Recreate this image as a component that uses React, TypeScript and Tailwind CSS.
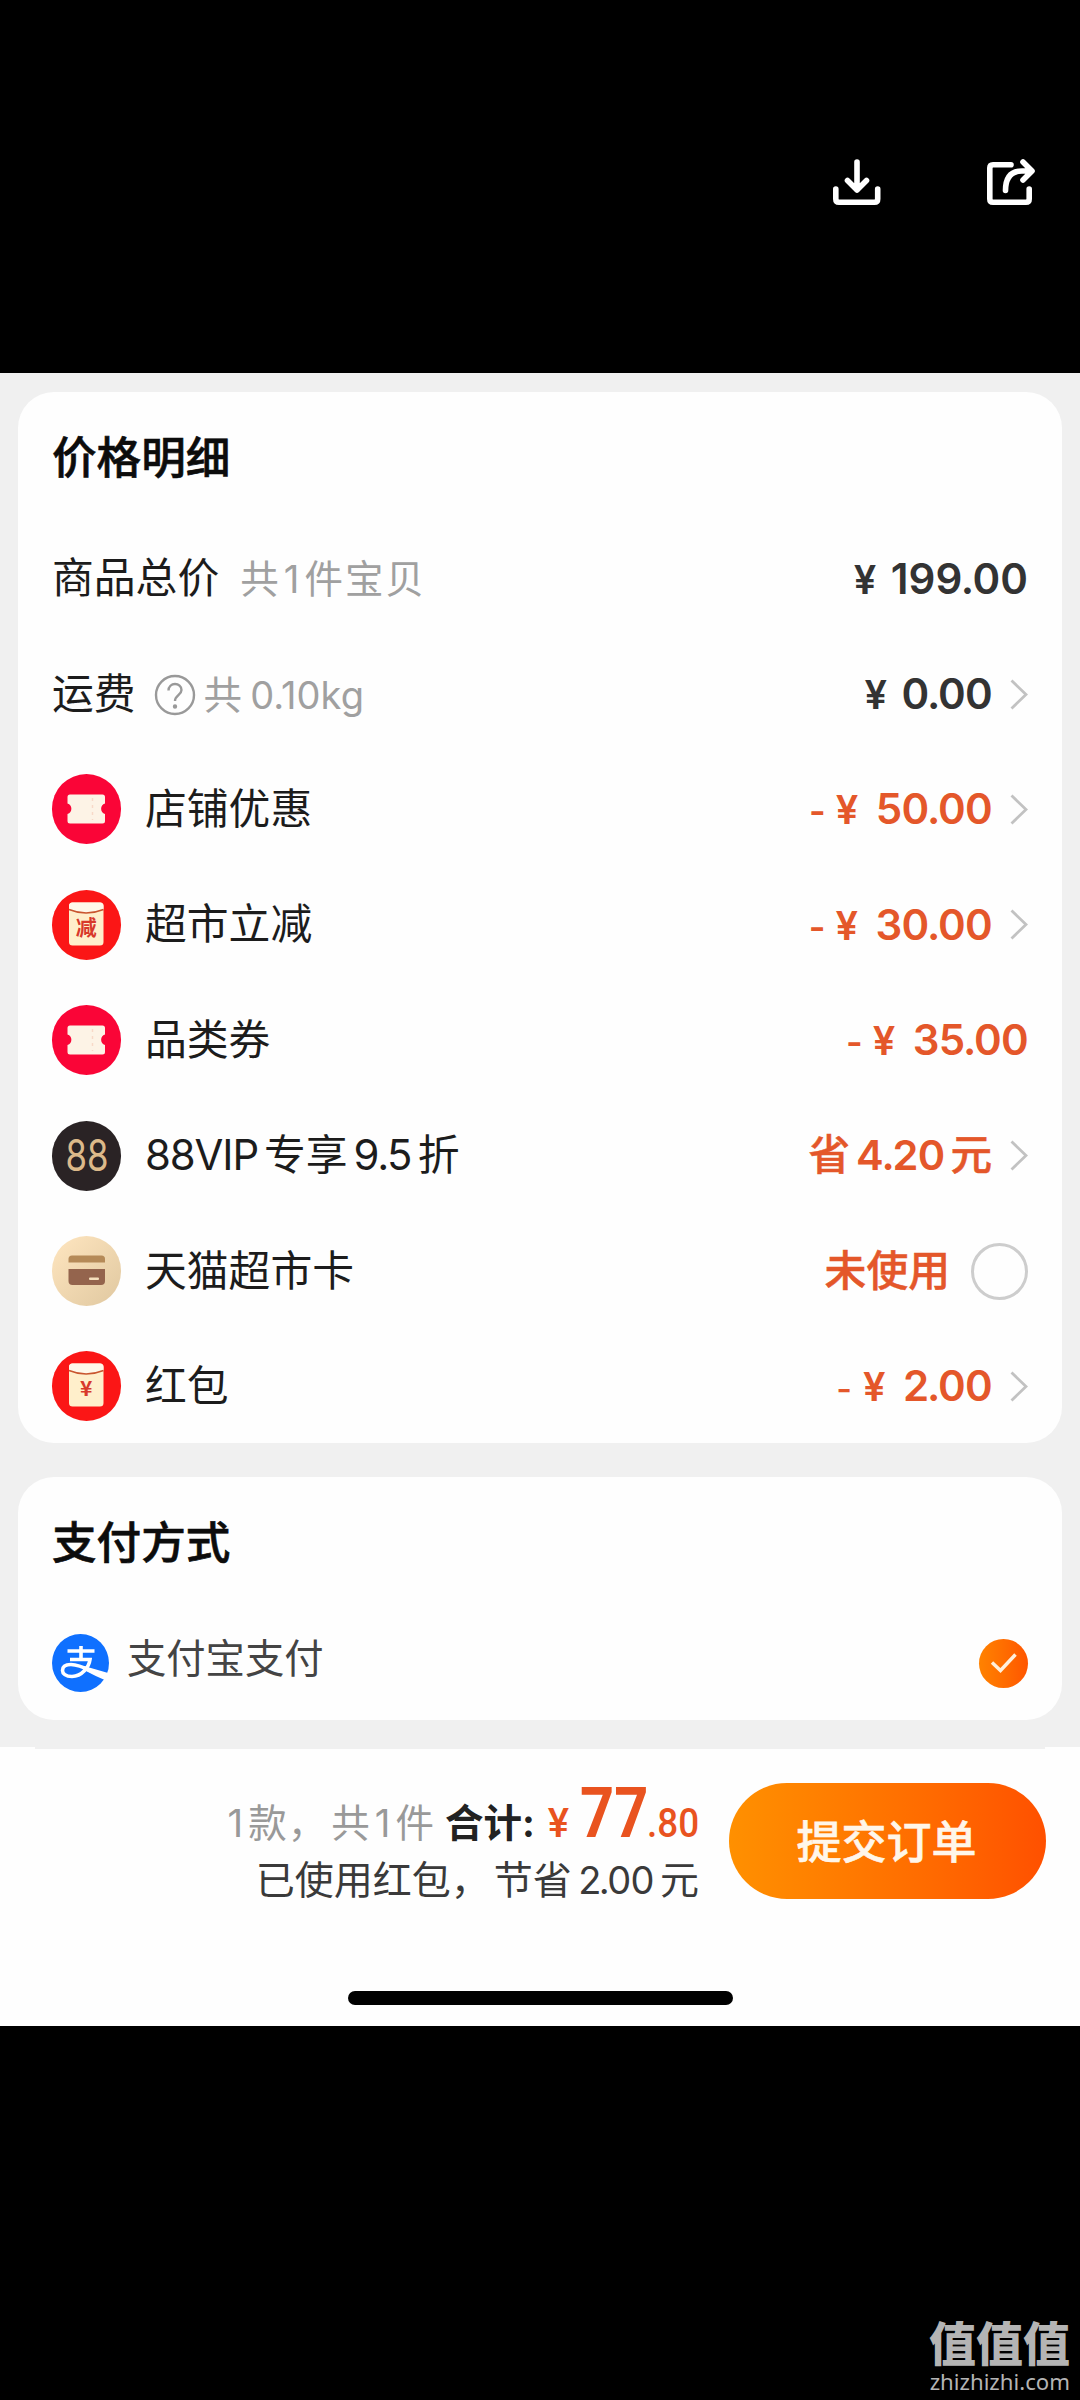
import type { ReactNode } from 'react';

const Badge = ({ className, children }: { className: string; children: ReactNode }) => (
  <div className={`mr-[24px] h-[70px] w-[69px] shrink-0 overflow-hidden rounded-full ${className}`}>
    <svg viewBox="0 0 69 70" className="h-full w-full">{children}</svg>
  </div>
);

const Ticket = () => (
  <Badge className="bg-[#fa0537]">
    <path
      d="M18 20.5H50.5a2.500 2.500 0 0 1 2.500 2.500V29.500a5.500 5.500 0 0 0 0 10.500V47a2.500 2.500 0 0 1-2.500 2.500H18a2.500 2.500 0 0 1-2.500-2.500V40a5.500 5.500 0 0 0 0-10.500V23a2.500 2.500 0 0 1 2.500-2.500Z"
      fill="#fdf3e6"
    />
    <path d="M40.500 24v22" stroke="#f8d9c8" strokeWidth="1.500" strokeDasharray="3 4" />
  </Badge>
);

const Envelope = ({ mark }: { mark: string }) => (
  <Badge className="bg-[#fb1616]">
    <rect x="17" y="12.500" width="34.500" height="43" rx="3.500" fill="#ffefcb" />
    <path d="M17 19.500V16a3.500 3.500 0 0 1 3.500-3.500H48a3.500 3.500 0 0 1 3.500 3.500v3.500q-17 7-34.500 0Z" fill="#fff8ea" />
    <path d="M17 19.500q17 7 34.500 0" fill="none" stroke="#c9562f" strokeWidth="1.600" />
    <text x="34.300" y="45" textAnchor="middle" fontSize="21" fontWeight="700" fill="#d8392b" fontFamily="'Noto Sans CJK SC', sans-serif">
      {mark}
    </text>
  </Badge>
);

const Vip = () => (
  <Badge className="bg-[#2a2325]">
    <text x="13.500" y="50" fontSize="44" textLength="43" lengthAdjust="spacingAndGlyphs" fill="#dcb98a" fontWeight="400" fontFamily="Inter, sans-serif">
      88
    </text>
  </Badge>
);

const Card = () => (
  <Badge className="bg-linear-to-br from-[#ffe6c0] to-[#e0c8a0]">
    <path d="M20 19.500H49.500a3.500 3.500 0 0 1 3.500 3.500V26.500H16.500V23a3.500 3.500 0 0 1 3.500-3.500Z" fill="#b58a58" />
    <path d="M16.500 33H53V45a4 4 0 0 1-4 4H20.500a4 4 0 0 1-4-4Z" fill="#94644d" />
    <rect x="37" y="41.500" width="10" height="2.600" rx="1" fill="#f5dfbd" />
  </Badge>
);

const Alipay = () => (
  <svg viewBox="0 0 57 58" className="h-[58px] w-[57px]" fill="none">
    <ellipse cx="28.500" cy="29" rx="28.500" ry="29" fill="#0f70ff" />
    <path
      d="M15.500 17H42.500M29 12V25M18 25.500H38C37 33 30 42.500 20 42.500C13.500 42.500 10.500 39.500 10.500 36.500C10.500 32.500 14 30.500 19 30.500C27 30.500 34 34.500 41 38"
      stroke="#fff"
      strokeWidth="3.600"
    />
    <path d="M32 32 58 39.500 55 47Q43 42 31 35.500Z" fill="#fff" />
  </svg>
);

const Chevron = () => (
  <svg viewBox="0 0 18 31" className="ml-[18px] h-[31px] w-[18px] shrink-0" fill="none" stroke="#c2c2c2" strokeWidth="2.800">
    <path d="M1.500 1.500 16 15.500 1.500 29.500" />
  </svg>
);

/** A decimal number with the tight spacing around its point. */
const Num = ({ value }: { value: string }) => {
  const [whole, cents] = value.split('.');
  return (
    <>
      {whole}
      <span className="-mx-[1.6px]">.</span>
      {cents}
    </>
  );
};

const Row = ({ icon, label, children }: { icon?: ReactNode; label: ReactNode; children: ReactNode }) => (
  <div className="flex h-[115.4px] shrink-0 items-center justify-between pr-[34px] pl-[34px]">
    <div className="flex items-center">
      {icon}
      <div className="flex items-baseline pt-[1px] text-[41.8px] text-[#1c1c1c]">{label}</div>
    </div>
    <div className="flex items-center">{children}</div>
  </div>
);

const Amount = ({ minus, value, thin }: { minus?: boolean; value: string; thin?: boolean }) => (
  <div className={minus ? 'flex items-baseline font-semibold text-[#e4572a]' : 'flex items-baseline font-semibold text-[#333]'}>
    {minus && <span className={thin ? 'mr-[11px] text-[34px] font-medium' : 'mr-[10px] text-[36px]'}>-</span>}
    <span className={minus ? 'mr-[15px] w-[25px] text-[40px]' : 'mr-[12px] w-[25px] text-[40px]'}>¥</span>
    <span className={value.length > 5 ? 'text-[42px] tracking-[0px]' : 'text-[42px] tracking-[-0.7px]'}>
      <Num value={value} />
    </span>
  </div>
);

const Title = ({ children }: { children: ReactNode }) => (
  <h2 className="flex h-[129px] shrink-0 items-center pt-[3px] pl-[34px] text-[44.6px] font-medium text-[#0c0c0c] [-webkit-text-stroke:0.6px]">{children}</h2>
);

export default function App() {
  return (
    <div className="flex h-[2400px] w-[1080px] flex-col overflow-hidden bg-black font-['Inter','Noto_Sans_CJK_SC',sans-serif] leading-none whitespace-nowrap">
      <header className="flex h-[373px] shrink-0 items-start justify-end gap-[102px] pt-[157px] pr-[43px]">
        <svg viewBox="0 0 52 50" className="h-[50px] w-[52px]" fill="none" stroke="#fff" strokeWidth="5.600" strokeLinecap="round" strokeLinejoin="round">
          <path d="M26 5V33M16.500 23.500 26 33 35.500 23.500M4.800 32V42q0 3.200 3.200 3.200H43.500q3.200 0 3.200-3.200V32" />
        </svg>
        <svg viewBox="0 0 52 50" className="h-[50px] w-[52px]" fill="none" stroke="#fff" strokeWidth="5.600" strokeLinecap="round" strokeLinejoin="round">
          <path d="M26 7.700H8q-3.200 0-3.200 3.200V42q0 3.200 3.200 3.200H41q3.200 0 3.200-3.200V32M20.500 33.500Q20.500 14 37 14H46M38 5 47 14 38 23" />
        </svg>
      </header>

      <main className="flex h-[1374px] shrink-0 flex-col bg-[#f0f0f0] px-[18px] pt-[19px]">
        <section className="flex h-[1051px] shrink-0 flex-col rounded-[36px] bg-[#fefefe]">
          <Title>价格明细</Title>
          <Row
            label={
              <>
                商品总价
                <span className="ml-[21px] text-[38.5px] tracking-[2px] text-[#a0a0a0]">
                  共<span className="mx-[3px]">1</span>件宝贝
                </span>
              </>
            }
          >
            <Amount value="199.00" />
          </Row>
          <Row
            label={
              <>
                运费
                <svg viewBox="0 0 42 42" className="mr-[8px] ml-[18px] h-[42px] w-[42px] self-center" fill="none" stroke="#999" strokeWidth="2.400">
                  <circle cx="21" cy="21" r="19" />
                  <path d="M14.500 16.500C14.500 12.500 17.500 10 21 10s6.500 2.500 6.500 6c0 5-6.500 5.500-6.500 11" />
                  <circle cx="21" cy="32.500" r="1" fill="#999" />
                </svg>
                <span className="text-[38.5px] text-[#a0a0a0]">共</span>
                <span className="ml-[8px] text-[38px] tracking-[0.1px] text-[#a0a0a0]">0.10kg</span>
              </>
            }
          >
            <Amount value="0.00" />
            <Chevron />
          </Row>
          <Row icon={<Ticket />} label="店铺优惠">
            <Amount minus value="50.00" />
            <Chevron />
          </Row>
          <Row icon={<Envelope mark="减" />} label="超市立减">
            <Amount minus value="30.00" />
            <Chevron />
          </Row>
          <Row icon={<Ticket />} label="品类券">
            <Amount minus value="35.00" />
          </Row>
          <Row
            icon={<Vip />}
            label={
              <>
                <span className="tracking-[-1.1px]">88VIP</span>
                <span className="mx-[6px]">专享</span>
                <span className="tracking-[-0.7px]">
                  <Num value="9.5" />
                </span>
                <span className="ml-[6px]">折</span>
              </>
            }
          >
            <div className="flex items-baseline pt-[1px] text-[41.6px] text-[#e4572a]">
              <span className="font-medium [-webkit-text-stroke:0.5px]">省</span>
              <span className="mx-[6px] font-semibold tracking-[-0.7px]">
                <Num value="4.20" />
              </span>
              <span className="font-medium [-webkit-text-stroke:0.5px]">元</span>
            </div>
            <Chevron />
          </Row>
          <Row icon={<Card />} label="天猫超市卡">
            <span className="pt-[1px] text-[41.8px] font-medium text-[#e4572a] [-webkit-text-stroke:0.5px]">未使用</span>
            <span className="ml-[21px] h-[57px] w-[57px] rounded-full border-[3px] border-[#cdcdcd]" />
          </Row>
          <Row icon={<Envelope mark="¥" />} label="红包">
            <Amount minus thin value="2.00" />
            <Chevron />
          </Row>
        </section>

        <section className="mt-[34px] flex h-[243px] shrink-0 flex-col rounded-[36px] bg-[#fefefe]">
          <Title>支付方式</Title>
          <div className="flex h-[115px] items-center pr-[34px] pl-[34px]">
            <Alipay />
            <span className="mb-[8px] ml-[18px] text-[39.3px] text-[#444]">支付宝支付</span>
            <span className="ml-auto flex h-[49px] w-[49px] items-center justify-center rounded-full bg-linear-to-r from-[#ff8200] to-[#ff5500]">
              <svg viewBox="0 0 28 22" className="h-[22px] w-[28px]" fill="none" stroke="#fff0dc" strokeWidth="3.400">
                <path d="M2 10.500 10.500 18.500 25.500 2.500" />
              </svg>
            </span>
          </div>
        </section>
      </main>

      <footer className="flex h-[279px] shrink-0 flex-col items-center bg-[#fefefe]">
        <div className="h-[2px] w-[1010px] shrink-0 bg-[#f0f0f0]" />
        <div className="flex h-[242px] w-full shrink-0 justify-end pt-[29px] pr-[34px]">
          <div className="flex flex-col items-end">
            <div className="mr-[31px] flex h-[58px] items-baseline text-[38.5px] text-[#999]">
              <span className="tracking-[1px]">1</span>
              <span className="ml-[4px] tracking-[1px]">款，</span>
              <span className="ml-[4px]">共</span>
              <span className="mx-[5px]">1</span>
              <span>件</span>
              <span className="ml-[11px] font-bold text-[#222]">合计:</span>
              <span className="ml-[13px] font-['Roboto'] text-[40px] font-medium text-[#e9531f]">¥</span>
              <span className="ml-[11px] w-[67px] font-['Roboto'] text-[70px] font-bold text-[#e9531f]">
                <span className="inline-block origin-left scale-x-[0.85]">77</span>
              </span>
              <span className="w-[51px] font-['Roboto'] text-[40px] font-medium text-[#e9531f]">
                <span className="inline-block origin-left scale-x-[0.92]">.80</span>
              </span>
            </div>
            <div className="mt-[24px] mr-[30px] flex items-baseline text-[39px] text-[#3a3a3a]">
              已使用红包，<span className="ml-[4px]">节省</span>
              <span className="mx-[6.500px] text-[38px] tracking-[-0.9px]">
                <Num value="2.00" />
              </span>
              元
            </div>
          </div>
          <button className="mt-[5px] h-[116px] w-[317px] rounded-full bg-linear-to-r from-[#ff9000] to-[#ff5000] pt-[2px] pr-[2px] text-[45px] font-medium text-[#fff6ea] [-webkit-text-stroke:0.6px]">
            提交订单
          </button>
        </div>
        <div className="h-[14px] w-[385px] shrink-0 rounded-full bg-black" />
      </footer>

      <div className="mt-auto mr-[10px] flex flex-col items-end text-[#b4b4b4]">
        <div className="text-[47px] font-black">值值值</div>
        <div className="mt-[4px] mb-[7px] font-['Noto_Sans'] text-[22.2px]">zhizhizhi.com</div>
      </div>
    </div>
  );
}
